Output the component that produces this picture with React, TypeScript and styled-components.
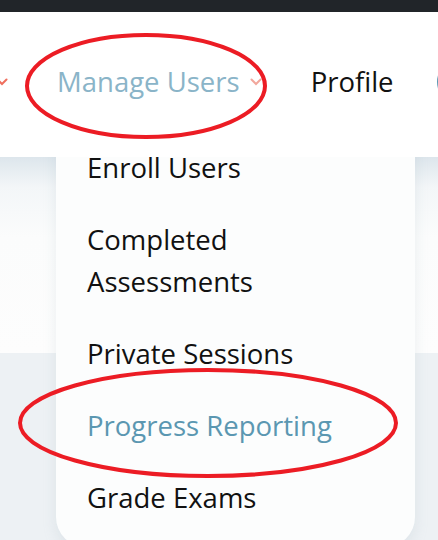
import React from "react";
import styled, { createGlobalStyle } from "styled-components";

const Global = createGlobalStyle`
  html, body { margin: 0; padding: 0; background: #edf1f4; }
  body { font-family: "Open Sans", "Noto Sans", sans-serif; overflow: hidden; }
`;

const Page = styled.div`
  position: relative;
  width: 438px;
  height: 540px;
  overflow: hidden;
  background: #edf1f4;
`;

const TopBar = styled.div`
  height: 12px;
  background: #212529;
  position: relative;
  z-index: 3;
`;

const Header = styled.header`
  height: 145px;
  background: #ffffff;
  display: flex;
  align-items: center;
  position: relative;
  z-index: 2;
`;

const Nav = styled.nav`
  display: flex;
  align-items: center;
  gap: 49px;
  padding-bottom: 6px;
  white-space: nowrap;
`;

const NavItem = styled.div<{ $active?: boolean }>`
  display: flex;
  align-items: center;
  gap: 10px;
  font-size: 27.5px;
  font-weight: 500;
  color: ${(p) => (p.$active ? "#8ab4c8" : "#111111")};
`;

const Avatar = styled.div`
  width: 44px;
  height: 44px;
  border-radius: 50%;
  border: 3px solid #5d99b4;
  box-sizing: border-box;
  flex: none;
  margin-left: -6px;
`;

const Hero = styled.section`
  height: 196px;
  background: linear-gradient(180deg, #dde6ec 0px, #f3f6f8 30px, #fbfcfc 80px, #fdfdfd 100%);
`;

const Lower = styled.section`
  height: 200px;
  background: #edf1f4;
`;

const Dropdown = styled.ul`
  position: absolute;
  left: 56px;
  top: 132px;
  width: 359px;
  height: 415px;
  margin: 0;
  padding: 0 0 0 31px;
  box-sizing: border-box;
  list-style: none;
  background: #fcfdfd;
  border-radius: 0 0 30px 30px;
  box-shadow: 0 6px 14px rgba(150, 170, 185, 0.18);
  z-index: 1;
`;

const Item = styled.li<{ $active?: boolean }>`
  padding: 15px 0;
  font-size: 27.5px;
  font-weight: 500;
  line-height: 42px;
  color: ${(p) => (p.$active ? "#5b97b1" : "#111111")};
`;

const Chevron = ({ color }: { color: string }) => (
  <svg width="12" height="8" viewBox="0 0 12 8">
    <path d="M1.5 1.5 L6 6 L10.5 1.5" fill="none" stroke={color} strokeWidth="2" strokeLinecap="round" />
  </svg>
);

const LeftChevron = styled.div`
  margin-left: -4px;
  display: flex;
`;

const Marks = styled.svg`
  position: absolute;
  left: 0;
  top: 0;
  z-index: 5;
  pointer-events: none;
`;

export default function App() {
  return (
    <>
      <Global />
      <Page>
        <TopBar />
        <Header>
          <Nav>
            <LeftChevron>
              <Chevron color="#ef6f5e" />
            </LeftChevron>
            <NavItem $active>
              Manage Users
              <Chevron color="#f2a79c" />
            </NavItem>
            <NavItem>Profile</NavItem>
            <Avatar />
          </Nav>
        </Header>
        <Hero />
        <Lower />
        <Dropdown>
          <Item>Enroll Users</Item>
          <Item>
            Completed
            <br />
            Assessments
          </Item>
          <Item>Private Sessions</Item>
          <Item $active>Progress Reporting</Item>
          <Item>Grade Exams</Item>
        </Dropdown>
        <Marks width="438" height="540" viewBox="0 0 438 540">
          <ellipse cx="146" cy="86" rx="119" ry="51" fill="none" stroke="#ec1c24" strokeWidth="4" />
          <ellipse cx="208" cy="423" rx="188" ry="53" fill="none" stroke="#ec1c24" strokeWidth="4" />
        </Marks>
      </Page>
    </>
  );
}
